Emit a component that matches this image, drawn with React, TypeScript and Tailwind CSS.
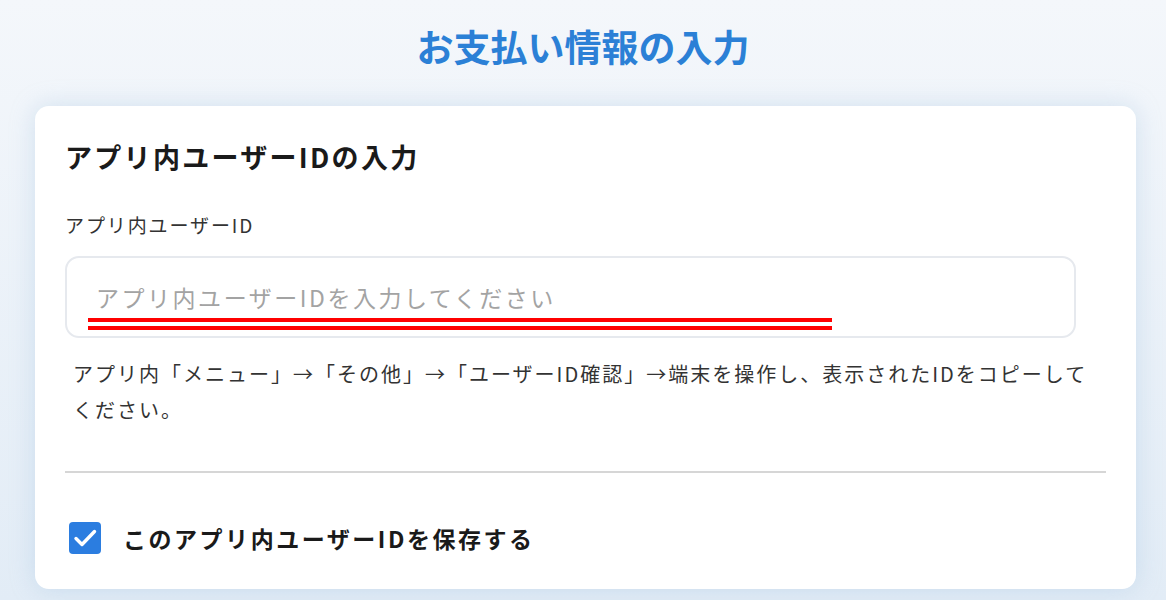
import React from "react";

const FONT = '"Noto Sans CJK JP", "Noto Sans", sans-serif';

export default function App() {
  return (
    <div
      className="min-h-screen w-full bg-gradient-to-b from-[#f4f7fb] to-[#e2ecf6] pb-[12px]"
      style={{ fontFamily: FONT }}
    >
      {/* Page title */}
      <h1 className="pt-[22px] text-center text-[37px] font-bold leading-[48px] text-[#2b80d6]">
        お支払い情報の入力
      </h1>

      {/* Card */}
      <div className="mt-[36px] ml-[35px] mr-[30px] rounded-[14px] bg-white px-[30px] pt-[31px] pb-[33px] shadow-[0_0_24px_rgba(150,185,220,0.35)]">
        <h2 className="text-[27px] font-bold leading-[40px] tracking-[0.085em] text-[#1a1a1a]">
          アプリ内ユーザーIDの入力
        </h2>

        <p className="mt-[34px] text-[19px] leading-[28px] tracking-widest text-[#333333]">
          アプリ内ユーザーID
        </p>

        {/* Input */}
        <div className="relative mt-[17px] mr-[30px] flex h-[82px] items-center rounded-[14px] border-2 border-[#e6e9ee] px-[29px]">
          <span className="text-[23px] tracking-[0.11em] text-[#a3a3a3]">
            アプリ内ユーザーIDを入力してください
          </span>
          {/* red double underline annotation */}
          <div className="absolute left-[21px] top-[60px] flex w-[744px] flex-col gap-[4px]">
            <div className="h-[4px] bg-[#ff0000]" />
            <div className="h-[4px] bg-[#ff0000]" />
          </div>
        </div>

        <p className="mt-[18px] px-[8px] text-[20px] leading-[36px] tracking-widest text-[#333333]">
          アプリ内「メニュー」→「その他」→「ユーザーID確認」→端末を操作し、表示されたIDをコピーしてください。
        </p>

        <div className="mt-[43px] h-[2px] bg-[#d6d6d6]" />

        {/* Save checkbox */}
        <label className="mt-[48px] flex items-center gap-[22px] pl-[4px]">
          <span className="flex h-[32px] w-[32px] items-center justify-center rounded-[4px] bg-[#2b7de0]">
            <svg viewBox="0 0 32 32" className="h-[32px] w-[32px]" fill="none" stroke="white" strokeWidth="3.4" strokeLinecap="round" strokeLinejoin="round">
              <path d="M7 16.5l6 6L25.5 9.5" />
            </svg>
          </span>
          <span className="text-[23px] font-bold tracking-[0.11em] text-[#1a1a1a]">
            このアプリ内ユーザーIDを保存する
          </span>
        </label>
      </div>
    </div>
  );
}
